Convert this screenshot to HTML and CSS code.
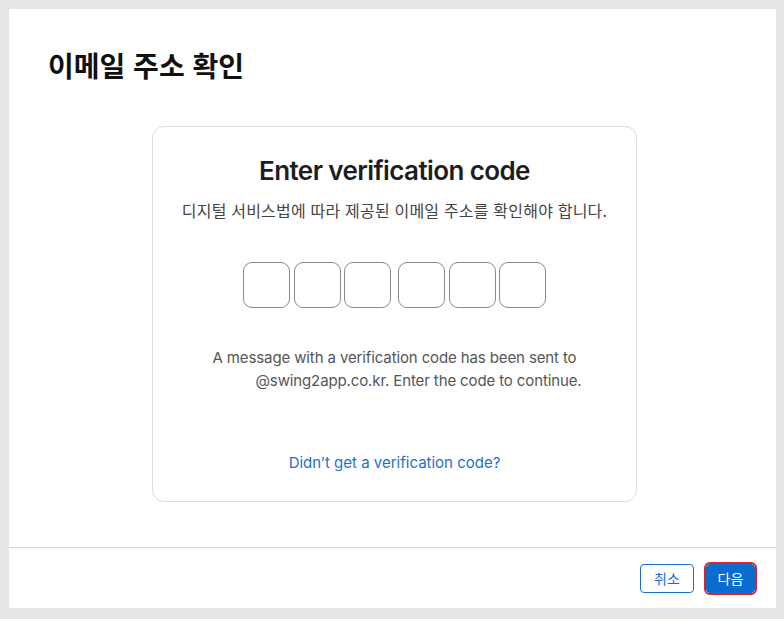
FILE: index.html
```html
<!DOCTYPE html>
<html lang="ko">
<head>
<meta charset="utf-8">
<link rel="stylesheet" href="styles.css">
</head>
<body>
<div class="dialog">
  <div class="content">
    <h1 class="title">이메일 주소 확인</h1>
    <div class="card">
      <h2 class="heading">Enter verification code</h2>
      <p class="sub">디지털 서비스법에 따라 제공된 이메일 주소를 확인해야 합니다.</p>
      <div class="codes">
        <div class="group">
          <span class="box"></span><span class="box"></span><span class="box"></span>
        </div>
        <div class="group">
          <span class="box"></span><span class="box"></span><span class="box"></span>
        </div>
      </div>
      <p class="msg">A message with a verification code has been sent to<br><span class="blank"></span>@swing2app.co.kr. Enter the code to continue.</p>
      <a class="link" href="#">Didn’t get a verification code?</a>
    </div>
  </div>
  <div class="footer">
    <button class="btn cancel">취소</button>
    <button class="btn next">다음</button>
  </div>
</div>
</body>
</html>
```

FILE: styles.css
```css
html, body { margin: 0; padding: 0; }
body {
  background: #e5e5e5;
  padding: 9px 8px 11px 9px;
  font-family: Inter, "Noto Sans CJK KR", sans-serif;
}
.dialog {
  width: 767px;
  height: 599px;
  background: #fff;
  display: flex;
  flex-direction: column;
}
.content {
  height: 538px;
}
.title {
  margin: 38px 0 0 39px;
  font-family: "Noto Sans CJK KR", sans-serif;
  font-size: 28px;
  line-height: 36px;
  font-weight: 700;
  color: #111;
}
.card {
  margin: 43px 0 0 143px;
  width: 483px;
  height: 374px;
  border: 1px solid #dcdcdc;
  border-radius: 12px;
  display: flex;
  flex-direction: column;
  align-items: center;
  text-align: center;
}
.heading {
  margin: 27px 0 0;
  font-size: 26px;
  line-height: 34px;
  font-weight: 600;
  color: #1d1d1f;
  letter-spacing: -0.6px;
}
.sub {
  margin: 11px 0 0;
  font-family: "Noto Sans CJK KR", sans-serif;
  font-size: 16px;
  line-height: 22px;
  letter-spacing: 0.2px;
  color: #444;
}
.codes {
  margin-top: 41px;
  display: flex;
  gap: 7px;
}
.group { display: flex; gap: 3.5px; }
.box {
  width: 45px;
  height: 44px;
  border: 1px solid #8a8a8a;
  border-radius: 9px;
}
.msg {
  margin: 38px 0 0;
  font-size: 15px;
  line-height: 23px;
  letter-spacing: -0.12px;
  color: #555;
}
.blank { display: inline-block; width: 48px; }
.link {
  margin-top: 61px;
  font-size: 15px;
  line-height: 20px;
  color: #1f6fd0;
  text-decoration: none;
}
.footer {
  flex: 1;
  border-top: 1px solid #d6d6d6;
  display: flex;
  justify-content: flex-end;
  align-items: center;
  gap: 12px;
  padding-right: 21px;
}
.btn {
  height: 29px;
  border-radius: 4px;
  font-family: "Noto Sans CJK KR", sans-serif;
  font-size: 14px;
  padding: 0;
  cursor: pointer;
}
.cancel {
  width: 54px;
  background: #fff;
  border: 1px solid #1a6fc9;
  color: #1a6fc9;
}
.next {
  width: 49px;
  background: #0b6ccf;
  border: 1px solid #0b6ccf;
  color: #fff;
  outline: 2px solid #e0202a;
  outline-offset: 0;
}
```
